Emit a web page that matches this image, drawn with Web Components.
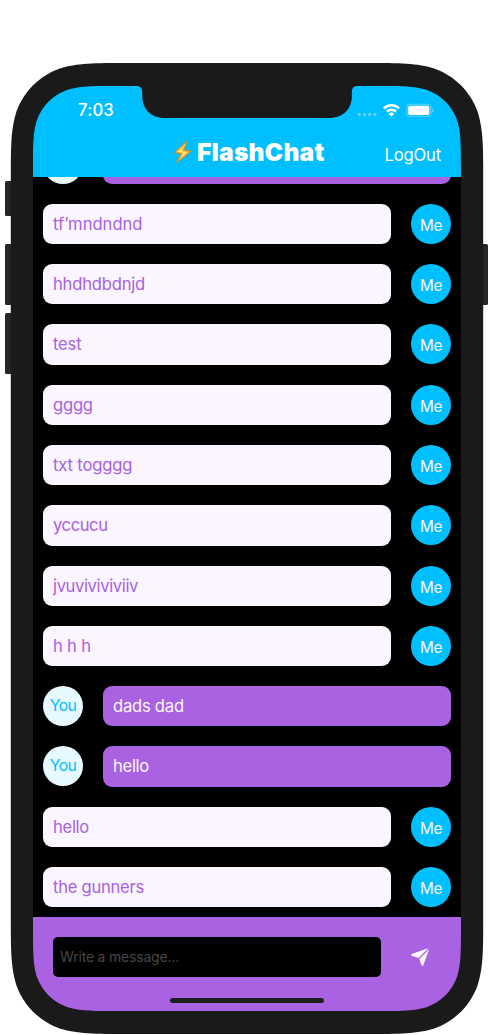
<!DOCTYPE html>
<html lang="en">
<head>
<meta charset="utf-8">
<title>FlashChat</title>
<style>
html,body{margin:0;background:#fff;width:494px;height:1035px;overflow:hidden;font-family:Inter,"Liberation Sans",sans-serif}
</style>
</head>
<body>
<phone-frame>
  <chat-header></chat-header>
  <chat-log>
    <chat-message from="you" blank></chat-message>
    <chat-message from="me" w="89.5">tf’mndndnd</chat-message>
    <chat-message from="me" w="92">hhdhdbdnjd</chat-message>
    <chat-message from="me" w="28.5">test</chat-message>
    <chat-message from="me" w="39.8">gggg</chat-message>
    <chat-message from="me" w="79.3">txt togggg</chat-message>
    <chat-message from="me" w="54.6">yccucu</chat-message>
    <chat-message from="me" w="85">jvuviviviviiv</chat-message>
    <chat-message from="me" w="37.8">h h h</chat-message>
    <chat-message from="you" w="70.8">dads dad</chat-message>
    <chat-message from="you" w="36">hello</chat-message>
    <chat-message from="me" w="36">hello</chat-message>
    <chat-message from="me" w="91">the gunners</chat-message>
  </chat-log>
  <chat-composer></chat-composer>
</phone-frame>
<script>
// Text whose tracking is adjusted to occupy a given advance width.
class TrackedText extends HTMLElement {
  constructor() {
    super();
    this.attachShadow({mode: 'open'}).innerHTML =
      `<style>:host{display:inline-block;white-space:pre}</style><slot></slot>`;
  }
  connectedCallback() {
    const w = parseFloat(this.getAttribute('w')), n = this.textContent.length;
    if (w && n) this.style.letterSpacing = (w - this.getBoundingClientRect().width) / n + 'px';
  }
}

// Continuous-curvature rounded rectangle outline.
function squircle(x, y, w, h, r, top) {
  const a = 1.52866 * r, b = 1.08849 * r, c = .86841 * r, d = .63149 * r, e = .07491 * r, f = .37283 * r, g = .16906 * r;
  const X = x + w, Y = y + h;
  return `M${x + a} ${y}${top || ''}H${X - a}C${X - b} ${y} ${X - c} ${y} ${X - d} ${y + e}C${X - f} ${y + g} ${X - g} ${y + f} ${X - e} ${y + d}C${X} ${y + c} ${X} ${y + b} ${X} ${y + a}` +
    `V${Y - a}C${X} ${Y - b} ${X} ${Y - c} ${X - e} ${Y - d}C${X - g} ${Y - f} ${X - f} ${Y - g} ${X - d} ${Y - e}C${X - c} ${Y} ${X - b} ${Y} ${X - a} ${Y}` +
    `H${x + a}C${x + b} ${Y} ${x + c} ${Y} ${x + d} ${Y - e}C${x + f} ${Y - g} ${x + g} ${Y - f} ${x + e} ${Y - d}C${x} ${Y - c} ${x} ${Y - b} ${x} ${Y - a}` +
    `V${y + a}C${x} ${y + b} ${x} ${y + c} ${x + e} ${y + d}C${x + g} ${y + f} ${x + f} ${y + g} ${x + d} ${y + e}C${x + c} ${y} ${x + b} ${y} ${x + a} ${y}Z`;
}

class PhoneFrame extends HTMLElement {
  constructor() {
    super();
    const notch = 'H103C107.5 0 109.3 2 109.3 6.5V10C109.3 23 118 32 132 32H296C310 32 318.8 23 318.8 10V6.5C318.8 2 320.5 0 325 0';
    this.attachShadow({mode: 'open'}).innerHTML = `
<style>
:host{display:grid;width:494px;height:1035px;box-sizing:border-box;position:relative}
.body{position:absolute;inset:0}
.screen{position:relative;margin:86px 0 0 33px;width:428px;height:925px;display:flex;flex-direction:column;background:#000;overflow:hidden;
clip-path:path('${squircle(0, 0, 428, 925, 53.5, notch)}')}
</style>
<svg class="body" width="494" height="1035">
<g fill="#262626"><rect x="5" y="181" width="10" height="35" rx="1.5"/><rect x="5" y="244" width="10" height="61" rx="1.5"/><rect x="5" y="313" width="10" height="61" rx="1.5"/><rect x="478" y="244" width="10" height="61" rx="1.5"/></g>
<path fill="#1a1a1a" d="${squircle(10.8, 63, 472.4, 971, 76.5)}"/></svg>
<div class="screen"><slot></slot></div>`;
  }
}

class ChatHeader extends HTMLElement {
  constructor() {
    super();
    this.attachShadow({mode: 'open'}).innerHTML = `
<style>
:host{display:flex;flex-direction:column;height:91px;flex:none;background:#00bfff;color:#fff;position:relative;z-index:1}
.status{display:flex;justify-content:space-between;padding:14px 27px 0 45px;height:21px}
.time{font-size:16.7px;font-weight:550;line-height:21px}
.bar{display:grid;grid-template-columns:1fr auto;padding:11px 20px 0 140px;line-height:34px}
.title{display:flex;align-items:center;gap:5px;font-size:24.6px;font-weight:900}
.out{font-size:16.6px;padding-top:6px}
</style>
<div class="status"><tracked-text class="time" w="36">7:03</tracked-text>
<svg width="77" height="21" viewBox="357 100 77 21">
<g fill="#5dd4ff"><circle cx="359.2" cy="114.5" r="1.7"/><circle cx="364.5" cy="114.5" r="1.7"/><circle cx="369.7" cy="114.5" r="1.7"/><circle cx="375" cy="114.5" r="1.7"/></g>
<g fill="none" stroke="#fff" stroke-width="2.5"><path d="M383.8 108.3A10.8 10.8 0 0 1 399 108.3"/><path d="M386.8 111.5A6.6 6.6 0 0 1 396 111.5"/></g>
<path fill="#fff" d="M391.4 116.5L388.7 113.9A3.8 3.8 0 0 1 394.1 113.9Z"/>
<rect x="406.8" y="104.3" width="24" height="12" rx="3.4" fill="none" stroke="#5dd4ff" stroke-width="1.1"/><rect x="408.2" y="105.8" width="21.1" height="9.1" rx="1.7" fill="#fff"/><path fill="#5dd4ff" d="M432.2 108.2Q433.8 108.6 433.8 110.3T432.2 112.4Z"/></svg></div>
<div class="bar"><div class="title">
<svg width="19" height="26" viewBox="173 139 19 26"><path fill="#f7a928" stroke="#d78a1b" stroke-width=".7" stroke-linejoin="round" d="M187.8 140.5L174.2 152.6L181 153.8L176.2 163.2L191 151.2L183.8 150Z"/><path fill="#ffe36c" d="M185.8 143.5L177.2 151.8L183.1 152.9L179.6 159.3L187.7 152L181.7 150.9Z"/></svg>
<tracked-text w="127.5">FlashChat</tracked-text></div><tracked-text class="out" w="56.5">LogOut</tracked-text></div>`;
  }
}

class ChatLog extends HTMLElement {
  constructor() {
    super();
    this.attachShadow({mode: 'open'}).innerHTML = `
<style>
:host{display:flex;flex-direction:column;justify-content:flex-end;gap:20px;flex:1;min-height:0;overflow:hidden;padding:0 10px 9.9px;background:#000}
</style><slot></slot>`;
  }
}

class ChatMessage extends HTMLElement {
  constructor() { super(); this.attachShadow({mode: 'open'}); }
  connectedCallback() {
    const me = this.getAttribute('from') === 'me', text = this.textContent;
    const label = this.hasAttribute('blank') ? '' : me ? '<tracked-text w="22">Me</tracked-text>' : '<tracked-text w="26.5">You</tracked-text>';
    const avatar = `<div class="avatar">${label}</div>`;
    const bubble = `<div class="bubble"><tracked-text w="${this.getAttribute('w')}">${text}</tracked-text></div>`;
    this.shadowRoot.innerHTML = `
<style>
:host{display:flex;gap:20px;height:40.27px;flex:none}
.bubble{flex:1;border-radius:9px;padding:0 10px;font-size:16.6px;line-height:41.8px;color:${me ? '#a862e2' : '#faf5ff'};background:${me ? '#faf5ff' : '#a862e2'}}
.avatar{width:40px;height:40px;border-radius:50%;text-align:center;line-height:${me ? 43.4 : 40.8}px;font-size:${me ? 15.3 : 15.8}px;color:${me ? '#faf5ff' : '#00bfff'};background:${me ? '#00bfff' : '#e6f9ff'}}
</style>${me ? bubble + avatar : avatar + bubble}`;
  }
}

class ChatComposer extends HTMLElement {
  constructor() {
    super();
    this.attachShadow({mode: 'open'}).innerHTML = `
<style>
:host{display:flex;flex-direction:column;align-items:center;height:94px;flex:none;background:#a862e2}
.row{display:flex;align-items:flex-start;align-self:stretch;padding:20px 20px 0;gap:30px}
.field{width:321px;height:40px;padding-left:7px;border-radius:5px;background:#000;color:#464646;font-size:14px;line-height:40px}
.send{margin-top:10px}
.home{width:153.5px;height:5px;border-radius:3px;background:#1f1f1f;margin-top:21px}
</style>
<div class="row"><div class="field"><tracked-text w="119">Write a message...</tracked-text></div>
<svg class="send" width="20" height="20" viewBox="411 947 20 20"><g fill="#faf5ff"><path d="M428.3 948.2L412 953.8Q410.6 954.6 411.7 955.8L418.6 957.9Z"/><path d="M429.2 949L419.4 958.9L421.3 965Q422.3 966.8 423.5 965Z"/></g></svg></div>
<div class="home"></div>`;
  }
}

customElements.define('tracked-text', TrackedText);
customElements.define('chat-message', ChatMessage);
customElements.define('chat-header', ChatHeader);
customElements.define('chat-log', ChatLog);
customElements.define('chat-composer', ChatComposer);
customElements.define('phone-frame', PhoneFrame);
</script>
</body>
</html>
